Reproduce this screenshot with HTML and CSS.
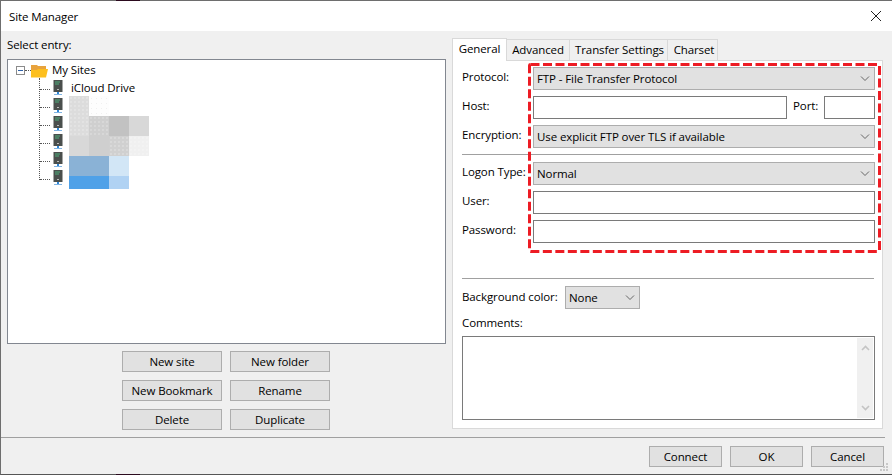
FILE: index.html
```html
<!DOCTYPE html>
<html lang="en">
<head>
<meta charset="utf-8">
<title>Site Manager</title>
<link rel="stylesheet" href="styles.css">
</head>
<body>
<div class="window">
  <header class="titlebar">
    <span class="title">Site Manager</span>
    <svg class="close" width="12" height="12" viewBox="0 0 12 12"><path d="M1 1 L11 11 M11 1 L1 11" stroke="#222" stroke-width="1" fill="none"/></svg>
  </header>
  <main class="content">
    <section class="left">
      <div class="select-label">Select entry:</div>
      <div class="tree">
        <div class="tree-vline"></div>
        <div class="tree-root">
          <span class="expander"><span class="minus"></span></span>
          <span class="hdots root-dots"></span>
          <svg class="folder" width="17" height="14" viewBox="0 0 17 14"><path d="M0 1 H6 L7 2 H15 V13 H0 Z" fill="#e8a33d"/><path d="M0 6 H6 L7 5 H17 L15 13.5 H0 Z" fill="#fdbf1e"/></svg>
          <span class="tree-text">My Sites</span>
        </div>
        <div class="tree-row"><span class="hdots"></span><svg class="server" width="10" height="16" viewBox="0 0 10 16"><use href="#srv"/></svg><span class="tree-text">iCloud Drive</span></div>
        <div class="tree-row"><span class="hdots"></span><svg class="server" width="10" height="16" viewBox="0 0 10 16"><use href="#srv"/></svg></div>
        <div class="tree-row"><span class="hdots"></span><svg class="server" width="10" height="16" viewBox="0 0 10 16"><use href="#srv"/></svg></div>
        <div class="tree-row"><span class="hdots"></span><svg class="server" width="10" height="16" viewBox="0 0 10 16"><use href="#srv"/></svg></div>
        <div class="tree-row"><span class="hdots"></span><svg class="server" width="10" height="16" viewBox="0 0 10 16"><use href="#srv"/></svg></div>
        <div class="tree-row"><span class="hdots"></span><svg class="server" width="10" height="16" viewBox="0 0 10 16"><use href="#srv"/></svg></div>
        <div class="mosaic">
          <i class="c1 dotted"></i><i class="c2 dotted-light"></i><i></i><i></i>
          <i class="c1 dotted"></i><i class="c3 dotted"></i><i class="c4"></i><i class="c5"></i>
          <i class="c5"></i><i class="c3"></i><i class="c6 dotted"></i><i class="c7 dotted"></i>
          <i class="b1 span2"></i><i class="b2"></i><i></i>
          <i class="b3 span2"></i><i class="b4"></i><i></i>
        </div>
      </div>
      <div class="site-buttons">
        <button class="btn">New site</button><button class="btn">New folder</button>
        <button class="btn">New Bookmark</button><button class="btn">Rename</button>
        <button class="btn">Delete</button><button class="btn">Duplicate</button>
      </div>
    </section>
    <section class="right">
      <div class="tabs">
        <span class="tab active">General</span>
        <span class="tab adv">Advanced</span>
        <span class="tab ts">Transfer Settings</span>
        <span class="tab cs">Charset</span>
      </div>
      <div class="panel">
        <div class="form-row"><label>Protocol:</label><div class="combo grow"><span>FTP - File Transfer Protocol</span><svg class="chev" width="10" height="6" viewBox="0 0 10 6"><path d="M1 0.5 L5 4.5 L9 0.5" stroke="#666" fill="none"/></svg></div></div>
        <div class="form-row"><label>Host:</label><div class="input host"></div><label class="port-label">Port:</label><div class="input port"></div></div>
        <div class="form-row"><label>Encryption:</label><div class="combo grow"><span>Use explicit FTP over TLS if available</span><svg class="chev" width="10" height="6" viewBox="0 0 10 6"><path d="M1 0.5 L5 4.5 L9 0.5" stroke="#666" fill="none"/></svg></div></div>
        <hr class="sep sep-a">
        <div class="form-row"><label>Logon Type:</label><div class="combo grow"><span>Normal</span><svg class="chev" width="10" height="6" viewBox="0 0 10 6"><path d="M1 0.5 L5 4.5 L9 0.5" stroke="#666" fill="none"/></svg></div></div>
        <div class="form-row"><label>User:</label><div class="input grow"></div></div>
        <div class="form-row"><label>Password:</label><div class="input grow"></div></div>
        <hr class="sep sep-b">
        <div class="bg-row"><label>Background color:</label><div class="combo small"><span>None</span><svg class="chev" width="10" height="6" viewBox="0 0 10 6"><path d="M1 0.5 L5 4.5 L9 0.5" stroke="#666" fill="none"/></svg></div></div>
        <div class="comments-label">Comments:</div>
        <div class="textarea">
          <div class="scrollbar">
            <svg width="9" height="6" viewBox="0 0 9 6"><path d="M1 5 L4.5 1.5 L8 5" stroke="#c4c4c4" stroke-width="1.6" fill="none"/></svg>
            <svg width="9" height="6" viewBox="0 0 9 6"><path d="M1 1 L4.5 4.5 L8 1" stroke="#c4c4c4" stroke-width="1.6" fill="none"/></svg>
          </div>
        </div>
      </div>
    </section>
  </main>
  <footer class="footer">
    <button class="btn foot">Connect</button>
    <button class="btn foot">OK</button>
    <button class="btn foot">Cancel</button>
  </footer>
  <span class="peek peek-top"></span>
  <span class="peek peek-bottom"></span>
  <svg class="grip" width="8" height="8" viewBox="0 0 8 8"><path d="M6 0h2v2H6zM3 3h2v2H3zM6 3h2v2H6zM0 6h2v2H0zM3 6h2v2H3zM6 6h2v2H6z" fill="#c8c8c8"/></svg>
  <svg class="dash-mark" width="353" height="190" viewBox="0 0 353 190"><rect x="1.5" y="1.5" width="350" height="187" rx="1" fill="none" stroke="#ed1c24" stroke-width="3" stroke-dasharray="9 3.5"/></svg>
  <svg width="0" height="0" class="defs"><defs><g id="srv">
    <rect x="0.5" y="0" width="9" height="12" fill="#4a4f4d"/>
    <rect x="2" y="1.5" width="5" height="1" fill="#4fae7c"/><rect x="2" y="3.5" width="4" height="1" fill="#4fae7c"/>
    <rect x="4" y="9" width="2" height="1" fill="#bbb"/>
    <rect x="4" y="12" width="2" height="2" fill="#2f86d6"/><rect x="1" y="14" width="8" height="1" fill="#7fb4e4"/>
  </g></defs></svg>
</div>
</body>
</html>
```

FILE: styles.css
```css
* { box-sizing: border-box; }
html, body { margin: 0; padding: 0; }
body { width: 892px; height: 475px; overflow: hidden; font-family: "Open Sans", "Noto Sans", sans-serif; font-size: 11.5px; letter-spacing: -0.1px; color: #000; }
.window { position: relative; width: 892px; height: 475px; background: #f0f0f0; border-top: 1px solid #6e6e6e; border-left: 1px solid #6e6e6e; border-bottom: 1px solid #555; display: flex; flex-direction: column; }
.titlebar { height: 30px; flex: none; background: #fff; display: flex; align-items: center; justify-content: space-between; padding: 0 10px 0 8px; }
.content { flex: none; height: 407px; display: flex; border-bottom: 1px solid #a0a0a0; margin-right: 7px; }
.left { width: 451px; flex: none; padding-left: 6px; }
.select-label { height: 28px; padding-top: 6px; line-height: 16px; }
.tree { position: relative; width: 439px; height: 285px; background: #fff; border: 1px solid #828790; padding: 1px 0 0 8px; }
.tree-vline { position: absolute; left: 31px; top: 18px; height: 102px; border-left: 1px dotted #555; }
.tree-root { display: flex; align-items: center; height: 19px; }
.expander { width: 9px; height: 9px; border: 1px solid #8b8b8b; display: flex; align-items: center; justify-content: center; flex: none; }
.minus { width: 5px; height: 1px; background: #2f62a8; }
.root-dots.hdots { width: 6px; }
.folder { margin-right: 4px; flex: none; }
.hdots { width: 10px; height: 0; border-top: 1px dotted #555; flex: none; }
.tree-row { display: flex; align-items: center; height: 18px; padding-left: 24px; }
.server { margin: 0 0 2px 3px; flex: none; }
.tree-text { line-height: 16px; margin-bottom: 2px; }
.tree-row .tree-text { margin-left: 8px; }
.mosaic { position: absolute; left: 61px; top: 36px; display: grid; grid-template-columns: repeat(4, 20px); grid-template-rows: 20px 20px 20px 20px 13px; }
.c1 { background-color: #dcdcdc; }
.c2 { background-color: #fdfdfd; }
.c3 { background-color: #cfcfcf; }
.c4 { background-color: #c2c2c2; }
.c5 { background-color: #d8d8d8; }
.c6 { background-color: #d0d0d0; }
.c7 { background-color: #f0f0f0; }
.b1 { background-color: #8ab2d6; }
.b2 { background-color: #d2e6f6; }
.b3 { background-color: #4fa1e8; }
.b4 { background-color: #b0d2f3; }
.span2 { grid-column: span 2; }
.dotted { background-image: radial-gradient(circle, rgba(255,255,255,.2) 0.7px, transparent 1px); background-size: 4px 4px; }
.dotted-light { background-image: radial-gradient(circle, #f0f0f0 0.7px, transparent 1px); background-size: 5px 5px; }
.site-buttons { display: grid; grid-template-columns: 100px 100px; grid-auto-rows: 21px; gap: 8px; justify-content: start; margin: 7px 0 0 115px; }
.btn { background: #e1e1e1; border: 1px solid #adadad; font: inherit; letter-spacing: inherit; color: #000; padding: 0; height: 21px; }
.right { width: 431px; flex: none; margin-top: 6px; display: flex; flex-direction: column; }
.tabs { display: flex; align-items: flex-end; height: 23px; flex: none; }
.tab { height: 21px; background: #f0f0f0; border: 1px solid #d9d9d9; border-bottom: 0; border-left: 0; line-height: 20px; text-align: center; }
.tab.active { width: 55px; height: 23px; background: #fff; border-left: 1px solid #d9d9d9; position: relative; top: 1px; }
.tab.adv { width: 63px; }
.tab.ts { width: 98px; padding-left: 2px; }
.tab.cs { width: 50px; padding-left: 3px; }
.panel { width: 431px; height: 369px; background: #fff; border: 1px solid #d9d9d9; padding: 6px 7px 0 9px; }
.form-row { display: flex; align-items: center; height: 23px; margin-bottom: 6px; }
.form-row label { width: 71px; flex: none; position: relative; top: -2px; white-space: nowrap; }
.form-row .port-label { width: 37px; padding-left: 6px; }
.grow { flex: 1; }
.combo { height: 23px; background: #e1e1e1; border: 1px solid #adadad; display: flex; align-items: center; justify-content: space-between; padding: 0 4px 0 3px; }
.input { height: 23px; background: #fff; border: 1px solid #7a7a7a; }
.host { width: 254px; flex: none; }
.port { width: 51px; flex: none; }
.sep { border: 0; border-top: 1px solid #a0a0a0; margin: 0 1px 0 0; }
.sep-a { margin-bottom: 7px; }
.sep-b { margin-top: 35px; margin-bottom: 7px; }
.bg-row { display: flex; align-items: center; height: 23px; }
.bg-row label { width: 103px; flex: none; position: relative; top: -1px; }
.small { width: 75px; height: 23px; }
.comments-label { margin-top: 6px; height: 21px; line-height: 16px; }
.textarea { height: 84px; background: #fff; border: 1px solid #7a7a7a; display: flex; justify-content: flex-end; padding: 1px 1px 1px 0; }
.scrollbar { width: 16px; background: #f0f0f0; display: flex; flex-direction: column; align-items: center; justify-content: space-between; padding: 7px 0; }
.footer { flex: 1; display: flex; justify-content: flex-end; gap: 8px; padding: 8px 8px 0 0; }
.foot { width: 73px; }
.peek { position: absolute; left: 115px; width: 24px; height: 1px; background: #2b0a1e; }
.peek-top { top: -1px; }
.peek-bottom { bottom: -1px; }
.grip { position: absolute; right: 4px; bottom: 3px; }
.dash-mark { position: absolute; left: 527px; top: 62px; }
.defs { position: absolute; }
```
